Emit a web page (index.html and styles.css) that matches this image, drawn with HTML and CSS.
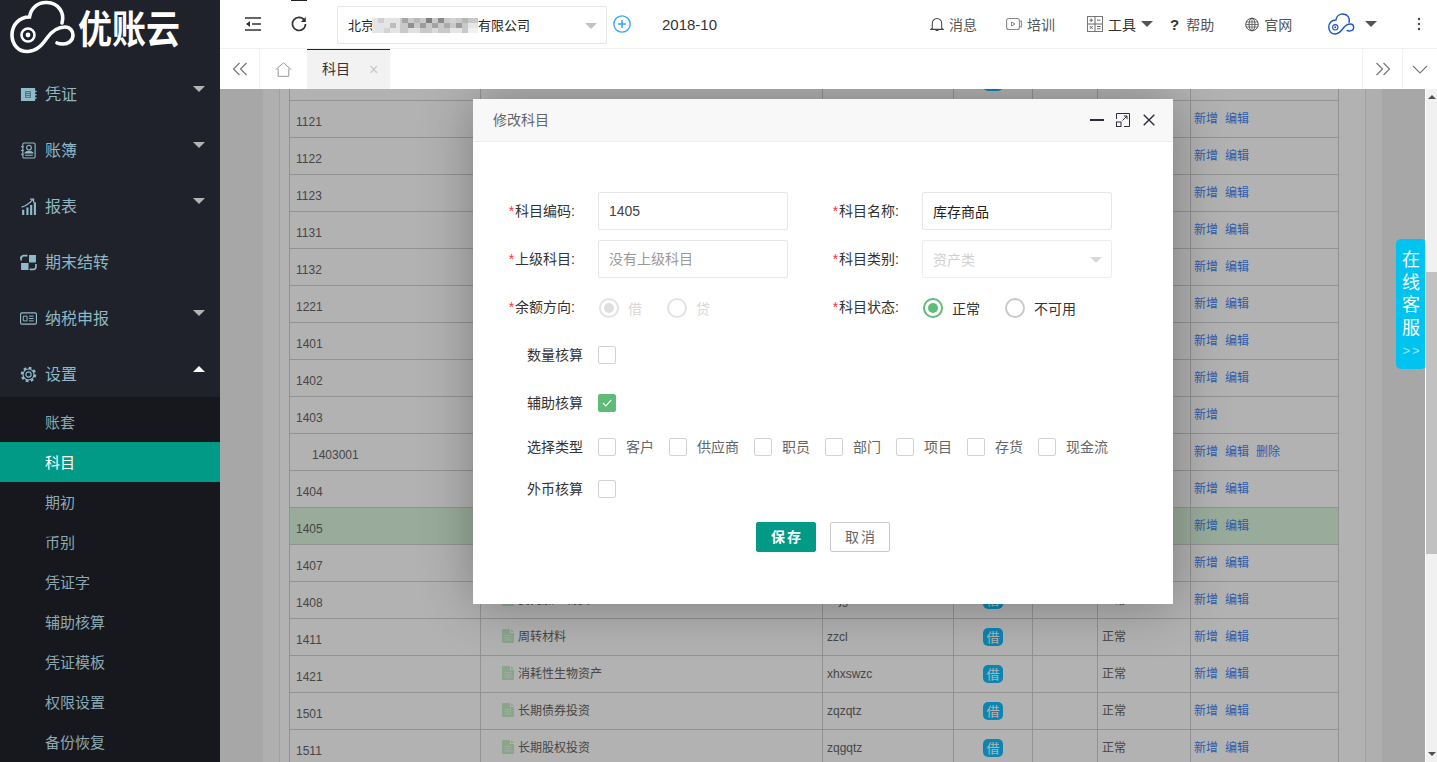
FILE: index.html
```html
<!DOCTYPE html>
<html lang="zh-CN">
<head>
<meta charset="utf-8">
<title>优账云</title>
<link rel="stylesheet" href="styles.css">
</head>
<body>
<svg class="defs" width="0" height="0" aria-hidden="true">
  <symbol id="cloud" viewBox="8 0 68 54">
    <path d="M62 23C65 12 58 3 47 2.5C38 2 31 8 29.5 17C19 17 12 25 12 35C12 45 19 52 28 51.5C37 51 42 45 47 38C52 31 58 27 65 27C70 27 73 31 73 35C73 41 68 44 63 44C61 44 59 44 57 43" fill="none" stroke="currentColor" stroke-width="3.6" stroke-linecap="round"/>
    <circle cx="28" cy="35" r="6.5" fill="none" stroke="currentColor" stroke-width="2.6"/>
    <circle cx="28" cy="35" r="2.4" fill="currentColor"/>
  </symbol>
  <symbol id="doc" viewBox="0 0 12 14">
    <path d="M0 1a1 1 0 0 1 1-1h7v4h4v9a1 1 0 0 1-1 1H1a1 1 0 0 1-1-1zM9 0l3 3H9z" fill="currentColor"/>
    <path d="M2.5 6.5h7M2.5 8.8h7M2.5 11h7" stroke="#fff" stroke-opacity=".55" stroke-width="1"/>
  </symbol>
</svg>
<div class="app">
  <aside class="sidebar">
    <div class="brand">
      <svg class="brand-mark"><use href="#cloud"/></svg>
      <span class="brand-name">优账云</span>
    </div>
    <nav class="menu">
      <div class="menu-item">
        <svg class="menu-icon" viewBox="0 0 18 16"><path d="M1 1h15v3h1.500v1.500H16v2h1.500V9H16v2h1.500v1.500H16V15H1z" fill="currentColor"/><rect x="5.500" y="4.500" width="6" height="7" fill="#4d6a75"/><path d="M6.500 6h4M6.500 8h4M6.500 10h4" stroke="#a9cdd8" stroke-width=".8"/></svg>
        <span class="menu-label">凭证</span><i class="caret"></i>
      </div>
      <div class="menu-item">
        <svg class="menu-icon" viewBox="0 0 18 18"><path d="M3 2.500a1.500 1.500 0 0 1 1.500-1.500h10a1.500 1.500 0 0 1 1.500 1.500v13a1.500 1.500 0 0 1-1.500 1.500h-10A1.500 1.500 0 0 1 3 15.500zM1 5h3M1 9h3M1 13h3" fill="none" stroke="currentColor" stroke-width="1.200"/><circle cx="9.500" cy="6" r="2.500" fill="none" stroke="currentColor" stroke-width="1.200"/><path d="M5.500 11.500c1-1.700 7-1.700 8 0zM5.500 14h8" fill="none" stroke="currentColor" stroke-width="1.200"/></svg>
        <span class="menu-label">账簿</span><i class="caret"></i>
      </div>
      <div class="menu-item">
        <svg class="menu-icon" viewBox="0 0 16 16"><path d="M2 11h2v5H2zM6 9h2v7H6zM9.500 6.500h2V16h-2zM13 4h2v12h-2z" fill="currentColor"/><path d="M1.500 8.500C5 7.500 9 5 12 1.500M9.500 1h3.300v3.300" fill="none" stroke="currentColor" stroke-width="1.200"/></svg>
        <span class="menu-label">报表</span><i class="caret"></i>
      </div>
      <div class="menu-item">
        <svg class="menu-icon" viewBox="0 0 16 16"><path d="M1 8.500h7V15H1zM8.500 1H15v7H8.500z" fill="currentColor"/><path d="M7 1.500H3.500A2.500 2.500 0 0 0 1 4v2M1 4l-1-1M1 4l1-1M9 14.500h3.500A2.500 2.500 0 0 0 15 12v-2.500" fill="none" stroke="currentColor" stroke-width="1.500"/></svg>
        <span class="menu-label">期末结转</span>
      </div>
      <div class="menu-item">
        <svg class="menu-icon" viewBox="0 0 18 13"><rect x=".6" y=".6" width="16.800" height="11.800" rx="1.500" fill="none" stroke="currentColor" stroke-width="1.200"/><path d="M3.500 4h4v5h-4zM9.500 4h5M9.500 6.500h5M9.500 9h5" fill="none" stroke="currentColor" stroke-width="1"/></svg>
        <span class="menu-label">纳税申报</span><i class="caret"></i>
      </div>
      <div class="menu-item">
        <svg class="menu-icon" viewBox="0 0 18 18"><circle cx="9" cy="9" r="2.800" fill="none" stroke="currentColor" stroke-width="1.200"/><circle cx="9" cy="9" r="5.800" fill="none" stroke="currentColor" stroke-width="1.200"/><circle cx="9" cy="9" r="7" fill="none" stroke="currentColor" stroke-width="2.400" stroke-dasharray="2.900 2.600"/></svg>
        <span class="menu-label">设置</span><i class="caret caret-up"></i>
      </div>
    </nav>
    <div class="submenu">
      <div class="sub-item">账套</div>
      <div class="sub-item active">科目</div>
      <div class="sub-item">期初</div>
      <div class="sub-item">币别</div>
      <div class="sub-item">凭证字</div>
      <div class="sub-item">辅助核算</div>
      <div class="sub-item">凭证模板</div>
      <div class="sub-item">权限设置</div>
      <div class="sub-item">备份恢复</div>
    </div>
  </aside>

  <main class="main">
    <header class="topbar">
      <i class="top-mark"></i>
      <svg class="ic-indent" viewBox="0 0 16 14"><path d="M0 1h16M7 7h9M0 13h16" stroke="#333" stroke-width="1.500" fill="none"/><path d="M5 4v6L1 7z" fill="#333"/></svg>
      <svg class="ic-refresh" viewBox="0 0 16 16"><path d="M13.300 4.200A6.500 6.500 0 1 0 14.500 8" fill="none" stroke="#333" stroke-width="1.700"/><path d="M14.800 1v5h-5z" fill="#333"/></svg>
      <div class="company">
        <span class="company-a">北京</span>
        <svg class="mosaic" width="106" height="15" viewBox="0 0 106 15">
          <rect width="28" height="15" fill="#e4e4e4"/><rect x="28" width="78" height="15" fill="#c9c9c9"/>
          <rect x="6" width="6" height="5" fill="#cfcfcf"/><rect x="18" y="5" width="6" height="5" fill="#bdbdbd"/><rect x="12" y="10" width="6" height="5" fill="#d4d4d4"/>
          <rect x="30" width="6" height="5" fill="#a5a5a5"/><rect x="36" y="5" width="6" height="5" fill="#8f8f8f"/><rect x="42" width="6" height="5" fill="#b8b8b8"/><rect x="48" y="5" width="6" height="5" fill="#9c9c9c"/><rect x="54" width="6" height="5" fill="#7f7f7f"/><rect x="60" y="5" width="6" height="5" fill="#a3a3a3"/><rect x="66" width="6" height="5" fill="#8a8a8a"/><rect x="72" y="5" width="6" height="5" fill="#ababab"/><rect x="78" width="6" height="5" fill="#d2d2d2"/><rect x="84" y="5" width="6" height="5" fill="#9b9b9b"/><rect x="90" width="6" height="5" fill="#b7b7b7"/><rect x="96" y="5" width="10" height="5" fill="#e6e6e6"/><rect x="96" y="10" width="10" height="5" fill="#f1f1f1"/><rect x="36" y="10" width="12" height="5" fill="#e0e0e0"/><rect x="60" y="10" width="6" height="5" fill="#dadada"/><rect x="78" y="10" width="12" height="5" fill="#e5e5e5"/>
        </svg>
        <span class="company-b">有限公司</span>
        <i class="select-caret"></i>
      </div>
      <svg class="ic-plus" viewBox="0 0 18 18"><circle cx="9" cy="9" r="8.200" fill="none" stroke="#2ea5f5" stroke-width="1.300"/><path d="M5 9h8M9 5v8" stroke="#2ea5f5" stroke-width="1.500"/></svg>
      <span class="period">2018-10</span>
      <div class="top-nav">
        <div class="nav-item nav-msg">
          <svg class="ic14" viewBox="0 0 14 16"><path d="M2 12V6.500a5 5 0 0 1 10 0V12l1.500 1.200H.5zM5.500 14.500h3" fill="none" stroke="#444" stroke-width="1.100"/></svg><span>消息</span>
        </div>
        <div class="nav-item nav-train">
          <svg class="ic16" viewBox="0 0 16 14"><rect x=".6" y="1.500" width="12.800" height="11" rx="2" fill="none" stroke="#888" stroke-width="1.100"/><path d="M5.500 5l3.500 2-3.500 2zM14 4.500l1.400-.8v6.600l-1.400-.8" fill="none" stroke="#888" stroke-width="1"/></svg><span>培训</span>
        </div>
        <div class="nav-item nav-tools">
          <svg class="ic-calc" viewBox="0 0 16 16"><rect x=".5" y=".5" width="15" height="15" fill="none" stroke="#777"/><path d="M8 .5v15M.5 8h15M2.500 4.200h3.500M4.200 2.500V6M10 4.200h3.500M2.700 10l3 3M5.700 10l-3 3M10 10.500h3.500M10 12.800h3.500" stroke="#666" fill="none"/></svg><span>工具</span><i class="nav-caret"></i>
        </div>
        <div class="nav-item nav-help"><b>?</b><span>帮助</span></div>
        <div class="nav-item nav-site">
          <svg class="ic14" viewBox="0 0 14 14"><circle cx="7" cy="7" r="6.300" fill="none" stroke="#555"/><ellipse cx="7" cy="7" rx="3" ry="6.300" fill="none" stroke="#555"/><path d="M7 .7v12.600M1 4.500h12M.7 7h12.600M1 9.500h12" stroke="#555" stroke-width=".8"/></svg><span>官网</span>
        </div>
        <svg class="nav-logo"><use href="#cloud"/></svg>
        <i class="nav-caret nav-logo-caret"></i>
        <svg class="ic-dots" viewBox="0 0 4 14"><circle cx="2" cy="2" r="1.200" fill="#444"/><circle cx="2" cy="7" r="1.200" fill="#444"/><circle cx="2" cy="12" r="1.200" fill="#444"/></svg>
      </div>
    </header>

    <div class="tabbar">
      <div class="tab-btn tab-prev"><svg viewBox="0 0 16 14"><path d="M7.500 1L1.500 7l6 6M14.500 1l-6 6 6 6" fill="none" stroke="#777" stroke-width="1.200"/></svg></div>
      <div class="tab-home"><svg viewBox="0 0 17 15"><path d="M.7 7.700L8.500.8l7.800 6.900M3.200 6.500v7.800h10.600V6.500" fill="none" stroke="#999" stroke-width="1"/></svg></div>
      <div class="tab"><span>科目</span><i class="tab-close">×</i></div>
      <div class="tab-fill"></div>
      <div class="tab-btn tab-next"><svg viewBox="0 0 16 14"><path d="M1.500 1l6 6-6 6M8.500 1l6 6-6 6" fill="none" stroke="#777" stroke-width="1.200"/></svg></div>
      <div class="tab-btn tab-down"><svg viewBox="0 0 16 9"><path d="M1 1l7 7 7-7" fill="none" stroke="#777" stroke-width="1.100"/></svg></div>
    </div>

    <div class="work">
      <section class="content">
        <div class="panel">
          <div class="panel-inner">
            <table class="grid">
              <colgroup><col class="c1"><col class="c2"><col class="c3"><col class="c4"><col class="c5"><col class="c6"><col class="c7"></colgroup>
              <tbody>
                <tr><td class="code">1012</td><td class="name"><svg class="doc"><use href="#doc"/></svg>其他货币资金</td><td class="py">qthbzj</td><td class="dir"><b class="badge">借</b></td><td></td><td class="st">正常</td><td class="act"><a>新增</a><a>编辑</a></td></tr>
                <tr><td class="code">1121</td><td class="name"><svg class="doc"><use href="#doc"/></svg>应收票据</td><td class="py">yspj</td><td class="dir"><b class="badge">借</b></td><td></td><td class="st">正常</td><td class="act"><a>新增</a><a>编辑</a></td></tr>
                <tr><td class="code">1122</td><td class="name"><svg class="doc"><use href="#doc"/></svg>应收账款</td><td class="py">yszk</td><td class="dir"><b class="badge">借</b></td><td></td><td class="st">正常</td><td class="act"><a>新增</a><a>编辑</a></td></tr>
                <tr><td class="code">1123</td><td class="name"><svg class="doc"><use href="#doc"/></svg>预付账款</td><td class="py">yfzk</td><td class="dir"><b class="badge">借</b></td><td></td><td class="st">正常</td><td class="act"><a>新增</a><a>编辑</a></td></tr>
                <tr><td class="code">1131</td><td class="name"><svg class="doc"><use href="#doc"/></svg>应收股利</td><td class="py">ysgl</td><td class="dir"><b class="badge">借</b></td><td></td><td class="st">正常</td><td class="act"><a>新增</a><a>编辑</a></td></tr>
                <tr><td class="code">1132</td><td class="name"><svg class="doc"><use href="#doc"/></svg>应收利息</td><td class="py">yslx</td><td class="dir"><b class="badge">借</b></td><td></td><td class="st">正常</td><td class="act"><a>新增</a><a>编辑</a></td></tr>
                <tr><td class="code">1221</td><td class="name"><svg class="doc"><use href="#doc"/></svg>其他应收款</td><td class="py">qtysk</td><td class="dir"><b class="badge">借</b></td><td></td><td class="st">正常</td><td class="act"><a>新增</a><a>编辑</a></td></tr>
                <tr><td class="code">1401</td><td class="name"><svg class="doc"><use href="#doc"/></svg>材料采购</td><td class="py">clcg</td><td class="dir"><b class="badge">借</b></td><td></td><td class="st">正常</td><td class="act"><a>新增</a><a>编辑</a></td></tr>
                <tr><td class="code">1402</td><td class="name"><svg class="doc"><use href="#doc"/></svg>在途物资</td><td class="py">ztwz</td><td class="dir"><b class="badge">借</b></td><td></td><td class="st">正常</td><td class="act"><a>新增</a><a>编辑</a></td></tr>
                <tr><td class="code">1403</td><td class="name"><svg class="doc"><use href="#doc"/></svg>原材料</td><td class="py">ycl</td><td class="dir"><b class="badge">借</b></td><td></td><td class="st">正常</td><td class="act"><a>新增</a></td></tr>
                <tr><td class="code sub-code">1403001</td><td class="name"><svg class="doc"><use href="#doc"/></svg>原材料明细</td><td class="py">yclmx</td><td class="dir"><b class="badge">借</b></td><td></td><td class="st">正常</td><td class="act"><a>新增</a><a>编辑</a><a>删除</a></td></tr>
                <tr><td class="code">1404</td><td class="name"><svg class="doc"><use href="#doc"/></svg>材料成本差异</td><td class="py">clcbcy</td><td class="dir"><b class="badge">借</b></td><td></td><td class="st">正常</td><td class="act"><a>新增</a><a>编辑</a></td></tr>
                <tr class="current"><td class="code">1405</td><td class="name"><svg class="doc"><use href="#doc"/></svg>库存商品</td><td class="py">kcsp</td><td class="dir"><b class="badge">借</b></td><td></td><td class="st">正常</td><td class="act"><a>新增</a><a>编辑</a></td></tr>
                <tr><td class="code">1407</td><td class="name"><svg class="doc"><use href="#doc"/></svg>商品进销差价</td><td class="py">spjxcj</td><td class="dir"><b class="badge">借</b></td><td></td><td class="st">正常</td><td class="act"><a>新增</a><a>编辑</a></td></tr>
                <tr><td class="code">1408</td><td class="name"><svg class="doc"><use href="#doc"/></svg>委托加工物资</td><td class="py">wtjgwz</td><td class="dir"><b class="badge">借</b></td><td></td><td class="st">正常</td><td class="act"><a>新增</a><a>编辑</a></td></tr>
                <tr><td class="code">1411</td><td class="name"><svg class="doc"><use href="#doc"/></svg>周转材料</td><td class="py">zzcl</td><td class="dir"><b class="badge">借</b></td><td></td><td class="st">正常</td><td class="act"><a>新增</a><a>编辑</a></td></tr>
                <tr><td class="code">1421</td><td class="name"><svg class="doc"><use href="#doc"/></svg>消耗性生物资产</td><td class="py">xhxswzc</td><td class="dir"><b class="badge">借</b></td><td></td><td class="st">正常</td><td class="act"><a>新增</a><a>编辑</a></td></tr>
                <tr><td class="code">1501</td><td class="name"><svg class="doc"><use href="#doc"/></svg>长期债券投资</td><td class="py">zqzqtz</td><td class="dir"><b class="badge">借</b></td><td></td><td class="st">正常</td><td class="act"><a>新增</a><a>编辑</a></td></tr>
                <tr><td class="code">1511</td><td class="name"><svg class="doc"><use href="#doc"/></svg>长期股权投资</td><td class="py">zqgqtz</td><td class="dir"><b class="badge">借</b></td><td></td><td class="st">正常</td><td class="act"><a>新增</a><a>编辑</a></td></tr>
              </tbody>
            </table>
          </div>
        </div>

        <div class="shade"></div>

        <div class="dialog">
          <div class="dialog-head">
            <span class="dialog-title">修改科目</span>
            <div class="dialog-tools">
              <i class="tool-min"></i>
              <svg class="tool-max" viewBox="0 0 14 14"><path d="M.5 6V.5h13v13H8" fill="none" stroke="#2e2d3c"/><rect x=".5" y="9" width="4.500" height="4.500" fill="none" stroke="#2e2d3c"/><path d="M6.500 7.500L11 3M7.800 3H11v3.200" fill="none" stroke="#2e2d3c"/></svg>
              <svg class="tool-close" viewBox="0 0 12 12"><path d="M.7.7l10.600 10.600M11.300.7L.7 11.300" stroke="#2e2d3c" stroke-width="1.400"/></svg>
            </div>
          </div>
          <form class="dialog-body">
            <div class="row row-input">
              <div class="field"><label class="lbl"><em>*</em>科目编码:</label><div class="input val-num">1405</div></div>
              <div class="field"><label class="lbl"><em>*</em>科目名称:</label><div class="input val-text">库存商品</div></div>
            </div>
            <div class="row row-input row-gap">
              <div class="field"><label class="lbl"><em>*</em>上级科目:</label><div class="input val-hint">没有上级科目</div></div>
              <div class="field"><label class="lbl"><em>*</em>科目类别:</label><div class="input val-off">资产类<i class="select-caret off-caret"></i></div></div>
            </div>
            <div class="row row-radio row-gap">
              <div class="field">
                <label class="lbl"><em>*</em>余额方向:</label>
                <i class="radio off on"></i><span class="opt-off">借</span>
                <i class="radio off second-off"></i><span class="opt-off">贷</span>
              </div>
              <div class="field">
                <label class="lbl"><em>*</em>科目状态:</label>
                <i class="radio sel on"></i><span class="opt">正常</span>
                <i class="radio second-on"></i><span class="opt">不可用</span>
              </div>
            </div>
            <div class="row row-qty"><label class="lbl plain">数量核算</label><i class="check"></i></div>
            <div class="row row-aux"><label class="lbl plain">辅助核算</label><i class="check checked"><svg viewBox="0 0 18 18"><path d="M4.500 9l3.200 3.200 6-6.400" fill="none" stroke="#fff" stroke-width="1.300"/></svg></i></div>
            <div class="row row-type">
              <label class="lbl plain">选择类型</label>
              <div class="types">
                <i class="check"></i><span>客户</span>
                <i class="check"></i><span>供应商</span>
                <i class="check"></i><span>职员</span>
                <i class="check"></i><span>部门</span>
                <i class="check"></i><span>项目</span>
                <i class="check"></i><span>存货</span>
                <i class="check"></i><span>现金流</span>
              </div>
            </div>
            <div class="row row-fx"><label class="lbl plain">外币核算</label><i class="check"></i></div>
            <div class="actions"><button type="button" class="btn primary">保存</button><button type="button" class="btn">取消</button></div>
          </form>
        </div>

        <div class="support"><span>在</span><span>线</span><span>客</span><span>服</span><small>&gt;&gt;</small></div>
      </section>

      <div class="scrollbar">
        <i class="sb-up"></i>
        <div class="sb-track"><div class="sb-thumb"></div></div>
        <i class="sb-down"></i>
      </div>
    </div>
  </main>
</div>
</body>
</html>
```

FILE: styles.css
```css
* { box-sizing: border-box; }
html, body { margin: 0; height: 100%; overflow: hidden; }
body { font-family: "Liberation Sans", "Noto Sans CJK SC", sans-serif; font-size: 14px; color: #333; background: #fff; }
i, em { font-style: normal; }
.defs { position: absolute; }
.app { display: flex; width: 1437px; height: 762px; }

/* sidebar */
.sidebar { width: 220px; flex: none; height: 762px; background: #1f222b; overflow: hidden; display: flex; flex-direction: column; }
.brand { height: 61px; flex: none; display: flex; align-items: flex-start; color: #fff; }
.brand-mark { width: 68px; height: 54px; color: #fff; margin: 0 0 0 8px; flex: none; }
.brand-name { font-family: "Noto Sans CJK SC", sans-serif; font-weight: 700; font-size: 34px; line-height: 54px; margin-left: 2px; transform: scaleY(1.12); transform-origin: 50% 50%; }
.menu-item { height: 56px; flex: none; display: flex; align-items: center; padding: 10px 0 0 20px; color: #8fb7c4; position: relative; }
.menu-icon { width: 17px; height: 17px; flex: none; color: #8fbccb; }
.menu-label { font-family: "Noto Sans CJK SC", sans-serif; font-size: 16px; line-height: 24px; margin-left: 8px; padding-bottom: 2px; }
.caret { position: absolute; left: 193px; top: 25px; border: 6px solid transparent; border-bottom: 0; border-top: 6px solid #b4b4b4; }
.caret-up { border-top: 0; border-bottom: 6px solid #fff; }
.submenu { flex: 1; background: #17181e; padding-top: 5px; }
.sub-item { height: 40px; line-height: 40px; padding-left: 45px; font-family: "Noto Sans CJK SC", sans-serif; font-size: 15px; color: #8ba9b3; }
.sub-item.active { background: #009a87; color: #fff; }

/* main */
.main { flex: 1; min-width: 0; display: flex; flex-direction: column; height: 762px; }
.topbar { height: 49px; flex: none; display: flex; align-items: center; border-bottom: 1px solid #f0f0f0; position: relative; font-family: "Noto Sans CJK SC", sans-serif; }
.top-mark { position: absolute; left: 71px; top: 0; width: 16px; height: 1px; background: #1f222b; }
.ic-indent { width: 16px; height: 14px; margin-left: 25px; flex: none; }
.ic-refresh { width: 16px; height: 16px; margin-left: 30px; flex: none; }
.company { width: 270px; height: 38px; margin-left: 30px; margin-top: 2px; border: 1px solid #e6e6e6; border-radius: 2px; display: flex; align-items: center; padding-left: 10px; position: relative; font-size: 13px; color: #222; flex: none; }
.company-a { width: 24px; overflow: hidden; white-space: nowrap; padding-bottom: 2px; }
.company-b { padding-bottom: 2px; }
.mosaic { flex: none; }
.select-caret { position: absolute; right: 9px; top: 16px; border: 6px solid transparent; border-bottom: 0; border-top: 6px solid #c2c2c2; }
.ic-plus { width: 18px; height: 18px; margin-left: 6px; flex: none; }
.period { font-family: "Liberation Sans", sans-serif; font-size: 15px; margin-left: 31px; color: #333; }
.top-nav { display: flex; align-items: center; font-size: 14px; color: #555; position: relative; }
.nav-item { display: flex; align-items: center; flex: none; }
.nav-msg { margin-left: 213px; gap: 5px; }
.nav-train { margin-left: 29px; gap: 5px; }
.nav-tools { margin-left: 32px; gap: 5px; color: #333; }
.nav-help { margin-left: 17px; gap: 7px; }
.nav-help b { font-family: "Liberation Sans", sans-serif; font-size: 15px; color: #333; }
.nav-site { margin-left: 31px; gap: 5px; }
.ic14 { width: 14px; height: 15px; }
.ic16 { width: 16px; height: 14px; }
.ic-calc { width: 16px; height: 16px; }
.nav-caret { border: 6px solid transparent; border-bottom: 0; border-top: 6px solid #555; }
.nav-logo { width: 28px; height: 22px; margin-left: 35px; color: #1f57c3; }
.nav-logo-caret { margin-left: 10px; }
.ic-dots { width: 4px; height: 14px; margin-left: 40px; }

/* tabs */
.tabbar { height: 40px; flex: none; display: flex; background: #fff; }
.tab-btn { width: 40px; display: flex; align-items: center; justify-content: center; flex: none; }
.tab-prev { border-right: 1px solid #f2f2f2; }
.tab-prev svg, .tab-next svg { width: 16px; height: 14px; }
.tab-down svg { width: 16px; height: 9px; }
.tab-next, .tab-down { border-left: 1px solid #f2f2f2; width: 40px; }
.tab-down { width: 35px; }
.tab-home { width: 47px; flex: none; display: flex; align-items: center; justify-content: center; }
.tab-home svg { width: 17px; height: 15px; }
.tab { width: 83px; flex: none; background: #f2f2f2; border-top: 2px solid #1f222b; margin-top: -1px; display: flex; align-items: center; padding: 0 0 3px 15px; font-family: "Noto Sans CJK SC", sans-serif; font-size: 14px; color: #333; }
.tab-close { margin: 3px 0 0 19px; color: #c8c8c8; font-size: 16px; line-height: 1; font-family: "Liberation Sans", sans-serif; }
.tab-fill { flex: 1; }

/* content */
.work { flex: 1; min-height: 0; display: flex; }
.content { flex: 1; min-width: 0; position: relative; overflow: hidden; background: #f0f0f0; padding: 0 43px; }
.panel { height: 100%; padding: 0 16px; background: #fbfbfb; overflow: hidden; }
.panel-inner { height: 100%; background: #fff; border-left: 1px solid #e6e6e6; border-right: 1px solid #e6e6e6; padding: 0 29px 0 9px; overflow: hidden; }
.grid { table-layout: fixed; border-collapse: collapse; width: 1049px; margin-top: -26px; font-size: 12px; color: #666; }
.c1 { width: 191px; } .c2 { width: 342px; } .c3 { width: 131px; } .c4 { width: 79px; } .c5 { width: 65px; } .c6 { width: 93px; } .c7 { width: 148px; }
.grid td { height: 37px; padding: 0; border: 1px solid #d2d2d2; white-space: nowrap; overflow: hidden; background: #fff; }
.grid .current td { background: #dcf7df; }
.grid .code { padding: 5px 0 0 6px; }
.grid .sub-code { padding-left: 22px; }
.grid .name { padding: 0 0 3px 21px; font-family: "Noto Sans CJK SC", sans-serif; }
.doc { width: 12px; height: 14px; color: #c5eec8; vertical-align: -2px; margin-right: 4px; }
.grid .py { padding: 0 0 1px 4px; }
.dir { text-align: center; }
.badge { display: inline-block; width: 20px; height: 18px; line-height: 17px; border-radius: 5px; background: #11bfff; color: #fff; font-weight: 400; font-size: 13px; text-align: center; font-family: "Noto Sans CJK SC", sans-serif; vertical-align: middle; }
.grid .st { padding: 0 0 3px 4px; font-family: "Noto Sans CJK SC", sans-serif; }
.grid .act { padding: 0 0 3px 3px; font-family: "Noto Sans CJK SC", sans-serif; }
.act a { color: #3f87f5; margin-right: 7px; }

.shade { position: absolute; inset: 0; background: rgba(0, 0, 0, .3); }

/* dialog */
.dialog { position: absolute; left: 253px; top: 10px; width: 700px; height: 505px; background: #fff; box-shadow: 1px 1px 50px rgba(0, 0, 0, .3); display: flex; flex-direction: column; font-family: "Noto Sans CJK SC", sans-serif; }
.dialog-head { height: 43px; flex: none; background: #f8f8f8; border-bottom: 1px solid #eee; display: flex; align-items: center; padding: 0 18px 0 20px; }
.dialog-title { font-size: 14px; color: #666; padding-bottom: 3px; }
.dialog-tools { margin-left: auto; display: flex; align-items: center; }
.tool-min { width: 14px; height: 2px; background: #2e2d3c; }
.tool-max { width: 14px; height: 14px; margin-left: 12px; }
.tool-close { width: 12px; height: 12px; margin-left: 13px; }
.dialog-body { flex: 1; padding: 50px 0 0 0; }
.row { display: flex; align-items: center; }
.row-input { height: 38px; }
.row-gap { margin-top: 10px; }
.row-radio { height: 40px; }
.row-qty { height: 54px; }
.row-aux { height: 42px; }
.row-type { height: 46px; }
.row-fx { height: 38px; }
.field { width: 324px; flex: none; display: flex; align-items: center; }
.lbl { width: 125px; flex: none; text-align: right; font-family: "Liberation Sans", "Noto Sans CJK SC", sans-serif; font-size: 14px; color: #333; padding: 0 23px 2px 0; white-space: nowrap; }
.row-radio .lbl { padding-bottom: 4px; }
.lbl em { color: #f33; margin-right: 1px; }
.lbl.plain { color: #333; padding: 0 15px 2px 0; width: 125px; }
.row-type .lbl.plain { padding-bottom: 3px; }
.input { width: 190px; height: 38px; border: 1px solid #e6e6e6; border-radius: 2px; line-height: 36px; padding-left: 10px; position: relative; flex: none; font-size: 14px; }
.val-num { font-family: "Liberation Sans", sans-serif; color: #444; }
.val-text { color: #222; }
.val-hint { color: #999; font-size: 14px; line-height: 34px; }
.val-off { color: #d0d0d0; border-color: #eee; }
.off-caret { border-top-color: #d8d8d8; top: 16px; }
.radio { width: 20px; height: 20px; border: 2px solid #c9c9c9; border-radius: 50%; flex: none; position: relative; display: block; }
.radio.on { margin-left: 1px; }
.radio.on::after { content: ""; position: absolute; left: 3px; top: 3px; width: 10px; height: 10px; border-radius: 50%; background: #5fbb78; }
.radio.off { border-color: #e2e2e2; }
.radio.off.on::after { background: #dedede; }
.radio.sel { border-color: #5fbb78; }
.opt, .opt-off { margin-left: 9px; font-size: 14px; padding-bottom: 1px; }
.opt { color: #333; }
.opt-off { color: #d8d8d8; }
.second-off { margin-left: 25px; }
.second-on { margin-left: 25px; }
.check { width: 18px; height: 18px; border: 1px solid #d2d2d2; border-radius: 2px; flex: none; display: block; background: #fff; }
.check.checked { background: #5fbb78; border-color: #5fbb78; }
.check svg { display: block; width: 16px; height: 16px; }
.types { display: flex; align-items: center; color: #666; font-size: 14px; }
.types span { margin-left: 10px; margin-right: 15px; padding-bottom: 3px; }
.actions { display: flex; justify-content: center; gap: 14px; margin-top: 14px; }
.btn { width: 60px; height: 30px; border: 1px solid #c9c9c9; border-radius: 2px; background: #fff; color: #666; font-family: "Noto Sans CJK SC", sans-serif; font-size: 14px; letter-spacing: 2px; padding: 0 0 2px 2px; }
.btn.primary { background: #009a87; border-color: #009a87; color: #fff; font-weight: 700; }

/* support */
.support { position: absolute; left: 1176px; top: 150px; width: 30px; height: 130px; background: #00c3ef; border-radius: 5px; color: #fff; display: flex; flex-direction: column; align-items: center; padding-top: 8px; font-family: "Noto Sans CJK SC", sans-serif; font-size: 18px; line-height: 22.500px; }
.support small { font-family: "Liberation Sans", sans-serif; font-size: 13px; letter-spacing: 2px; line-height: 18px; margin-top: 5px; opacity: .6; padding-left: 2px; }

/* scrollbar */
.scrollbar { width: 12px; flex: none; background: #f1f1f1; border-left: 1px solid #fff; display: flex; flex-direction: column; align-items: center; }
.sb-up { border: 4px solid transparent; border-top: 0; border-bottom: 4px solid #505050; margin: 6px 0 0; }
.sb-track { flex: 1; width: 100%; padding-top: 173px; }
.sb-thumb { height: 282px; background: #c1c1c1; }
.sb-down { border: 4px solid transparent; border-bottom: 0; border-top: 4px solid #505050; margin-bottom: 6px; }
```
